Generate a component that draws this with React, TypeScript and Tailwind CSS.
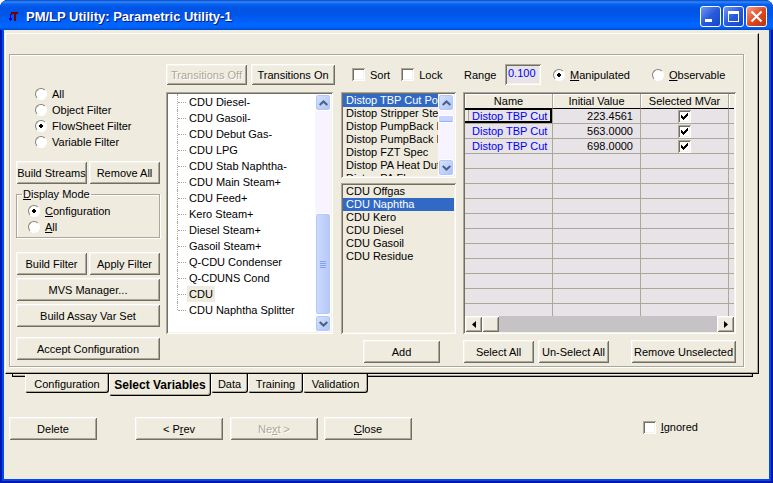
import React, { useState } from "react";

const raised =
  "bg-[#efebde] shadow-[inset_1px_1px_0_#fff,inset_-1px_-1px_0_#716f64,inset_2px_2px_0_#f5f2e9,inset_-2px_-2px_0_#aca899]";
const sunken =
  "shadow-[inset_1px_1px_0_#aca899,inset_-1px_-1px_0_#fff,inset_2px_2px_0_#716f64,inset_-2px_-2px_0_#f5f2e9]";

function Btn({ children, className = "", disabled = false, short = false }: { children: React.ReactNode; className?: string; disabled?: boolean; short?: boolean }) {
  return (
    <button
      type="button"
      disabled={disabled}
      className={`shrink-0 whitespace-nowrap text-center disabled:text-[#aca899] disabled:[text-shadow:1px_1px_0_#fff] ${short ? "h-[21px]" : "h-[23px]"} ${raised} ${className}`}
    >
      {children}
    </button>
  );
}

function Radio({ name, children, checked = false, className = "" }: { name: string; children: React.ReactNode; checked?: boolean; className?: string }) {
  return (
    <label className={`flex h-4 items-center gap-[5px] whitespace-nowrap ${className}`}>
      <input
        type="radio"
        name={name}
        defaultChecked={checked}
        className="size-3 shrink-0 appearance-none rounded-full border border-t-[#848274] border-l-[#848274] border-r-white border-b-white bg-white checked:bg-[radial-gradient(circle,#000_2px,#fff_2px)]"
      />
      <span>{children}</span>
    </label>
  );
}

function Check({ label, children, checked = false }: { label?: string; children?: React.ReactNode; checked?: boolean }) {
  const [on, setOn] = useState(checked);
  return (
    <label className="inline-flex items-center gap-[5px] whitespace-nowrap">
      <span className="relative block size-[13px]">
        <input
          type="checkbox"
          aria-label={label}
          checked={on}
          onChange={() => setOn(!on)}
          className={`block size-[13px] appearance-none bg-white ${sunken}`}
        />
        {on && (
          <svg viewBox="0 0 13 13" className="pointer-events-none absolute inset-0 size-[13px]" shapeRendering="crispEdges">
            <path d="M3 5h1v1h1v1h1v-1h1v-1h1v-1h1v-1h1v3h-1v1h-1v1h-1v1h-1v1h-1v-1h-1v-1h-1z" fill="#000" />
          </svg>
        )}
      </span>
      {children && <span>{children}</span>}
    </label>
  );
}

function Arrow({ up = false }: { up?: boolean }) {
  return (
    <button
      type="button"
      aria-label={up ? "Scroll up" : "Scroll down"}
      className="flex h-[17px] w-full shrink-0 items-center justify-center rounded-[3px] border border-white bg-linear-to-br from-[#d6e3ff] to-[#adc3f7] shadow-[inset_0_0_0_1px_#b5c7f7]"
    >
      <svg viewBox="0 0 9 6" className="h-1.5 w-[9px]" fill="none" stroke="#4a6184" strokeWidth="2">
        <path d={up ? "M0.7 5 4.5 1.4 8.3 5" : "M0.7 1 4.5 4.6 8.3 1"} />
      </svg>
    </button>
  );
}

const tree = [
  "CDU Diesel-", "CDU Gasoil-", "CDU Debut Gas-", "CDU LPG", "CDU Stab Naphtha-", "CDU Main Steam+", "CDU Feed+",
  "Kero Steam+", "Diesel Steam+", "Gasoil Steam+", "Q-CDU Condenser", "Q-CDUNS Cond", "CDU", "CDU Naphtha Splitter",
];
const variables = [
  "Distop TBP Cut Point", "Distop Stripper Steam", "Distop PumpBack Rate", "Distop PumpBack Return", "Distop FZT Spec",
  "Distop PA Heat Duty", "Distop PA Flow",
];
const streams = ["CDU Offgas", "CDU Naphtha", "CDU Kero", "CDU Diesel", "CDU Gasoil", "CDU Residue"];
const rows = [
  ["Distop TBP Cut", "223.4561"],
  ["Distop TBP Cut", "563.0000"],
  ["Distop TBP Cut", "698.0000"],
];
const blanks = Array.from({ length: 11 }, (_, i) => i);
const tabs = [
  { name: "Configuration", size: "w-[84px]" },
  { name: "Select Variables", size: "w-[102px]" },
  { name: "Data", size: "w-[37px]" },
  { name: "Training", size: "w-[55px]" },
  { name: "Validation", size: "w-[65px]" },
];

function TitleBar() {
  const base = "flex size-[21px] items-center justify-center rounded-[3px] border border-white";
  const blue = "bg-linear-to-br from-[#7396ef] via-[#2959de] to-[#1845c6]";
  return (
    <header className="flex h-[30px] items-center bg-[linear-gradient(#0845c6_0px,#3188f7_2px,#0861ef_4px,#0055e7_8px,#0055e7_14px,#0065ff_24px,#0065ff_27px,#0049ce_30px)] pt-[3px] pr-1.5 pl-2">
      <svg viewBox="0 0 11 11" className="size-[11px] shrink-0" shapeRendering="crispEdges">
        <path d="M2 3h1v4h1v2h-1v1h-1v-1h-1v-2h1z" fill="#0000c6" />
        <path d="M3 1h7v2h-2v7h-2v-7h-2v1h-1z" fill="#730000" />
      </svg>
      <h1 className="ml-[7px] flex-1 text-[13px] font-bold whitespace-nowrap text-white [text-shadow:1px_1px_0_#001884]">
        PM/LP Utility: Parametric Utility-1
      </h1>
      <div className="flex gap-0.5">
        <button type="button" aria-label="Minimize" className={`${base} ${blue}`}>
          <svg viewBox="0 0 19 19" className="size-[19px]"><path d="M4 12h7v3h-7z" fill="#fff" /></svg>
        </button>
        <button type="button" aria-label="Maximize" className={`${base} ${blue}`}>
          <svg viewBox="0 0 19 19" className="size-[19px]"><path d="M4 4h11v11h-11zM5 7v7h9v-7z" fill="#fff" fillRule="evenodd" /></svg>
        </button>
        <button type="button" aria-label="Close window" className={`${base} bg-linear-to-br from-[#f79c84] via-[#de4921] to-[#bd3010]`}>
          <svg viewBox="0 0 19 19" className="size-[19px]"><path d="M4.5 4.5 14.5 14.5M14.5 4.5 4.5 14.5" stroke="#fff" strokeWidth="2.2" /></svg>
        </button>
      </div>
    </header>
  );
}

function FilterColumn() {
  return (
    <div className="flex w-36 shrink-0 flex-col pt-[22px]">
      <div className="flex flex-col pl-[19px]">
        <Radio name="filter">All</Radio>
        <Radio name="filter">Object Filter</Radio>
        <Radio name="filter" checked>FlowSheet Filter</Radio>
        <Radio name="filter">Variable Filter</Radio>
      </div>
      <div className="mt-[11px] flex gap-0.5">
        <Btn className="w-[71px]">Build Streams</Btn>
        <Btn className="w-[71px]">Remove All</Btn>
      </div>
      <fieldset className="mt-1 border border-[#aca899] pt-[3px] pb-0.5 pl-[11px] shadow-[1px_1px_0_#fff,inset_1px_1px_0_#fff]">
        <legend className="-ml-1.5 h-3 px-px leading-3"><u>D</u>isplay Mode</legend>
        <Radio name="mode" checked><u>C</u>onfiguration</Radio>
        <Radio name="mode"><u>A</u>ll</Radio>
      </fieldset>
      <div className="mt-3.5 flex gap-0.5">
        <Btn className="w-[71px]">Build Filter</Btn>
        <Btn className="w-[71px]">Apply Filter</Btn>
      </div>
      <Btn className="mt-[3px]">MVS Manager...</Btn>
      <Btn className="mt-[3px]">Build Assay Var Set</Btn>
      <Btn className="mt-2.5">Accept Configuration</Btn>
    </div>
  );
}

function TreeColumn() {
  return (
    <div className="flex w-[169px] shrink-0 flex-col gap-[7px]">
      <div className="flex justify-between">
        <Btn short disabled className="w-[81px]">Transitions Off</Btn>
        <Btn short className="w-[84px]">Transitions On</Btn>
      </div>
      <div className={`flex h-[242px] w-[167px] bg-white p-0.5 ${sunken}`}>
        <ul role="tree" className="flex-1 pl-[9px]">
          {tree.map((t, i) => (
            <li key={t} role="treeitem" className="flex h-4 items-center whitespace-nowrap">
              <span className={`w-px self-start border-l border-dotted border-[#aca899] ${i === tree.length - 1 ? "h-2" : "h-4"}`} />
              <span className="w-2 border-t border-dotted border-[#aca899]" />
              <span className={`ml-px px-0.5 leading-4 ${t === "CDU" ? "bg-[#efebde]" : ""}`}>{t}</span>
            </li>
          ))}
        </ul>
        <div className="flex w-4 flex-col bg-[#f7f3ff]">
          <Arrow up />
          <div className="flex-1" />
          <div className="flex h-[102px] flex-col items-center justify-center gap-px rounded-[3px] border border-white bg-linear-to-r from-[#cedbff] to-[#b5c7f7] shadow-[inset_0_0_0_1px_#b5c7f7]">
            <i className="h-px w-1.5 bg-[#84a2e7]" />
            <i className="h-px w-1.5 bg-[#84a2e7]" />
            <i className="h-px w-1.5 bg-[#84a2e7]" />
            <i className="h-px w-1.5 bg-[#84a2e7]" />
          </div>
          <Arrow />
        </div>
      </div>
    </div>
  );
}

function ListColumn() {
  return (
    <div className="flex w-[116px] shrink-0 flex-col">
      <div className="flex h-[21px] items-center gap-[11px] pl-[11px]">
        <Check>Sort</Check>
        <Check>Lock</Check>
      </div>
      <div className={`mt-[7px] flex h-[86px] w-[115px] p-0.5 ${sunken}`}>
        <ul role="listbox" aria-label="Variables" className="h-full min-w-0 flex-1 overflow-hidden">
          {variables.map((v, i) => (
            <li key={v} role="option" aria-selected={i === 0} className={`h-[13px] overflow-hidden pl-[3px] leading-[13px] whitespace-nowrap ${i === 0 ? "bg-[#316ac5] text-white" : ""}`}>
              {v}
            </li>
          ))}
        </ul>
        <div className="flex w-4 flex-col bg-[#f7f3ff]">
          <Arrow up />
          <div className="mt-1 h-2 rounded-xs border border-white bg-[#c6d3ff] shadow-[inset_0_-1px_0_#94b2ef]" />
          <div className="flex-1" />
          <Arrow />
        </div>
      </div>
      <ul role="listbox" aria-label="Streams" className={`mt-[5px] h-[151px] w-[115px] p-0.5 ${sunken}`}>
        {streams.map((s, i) => (
          <li key={s} role="option" aria-selected={i === 1} className={`h-[13px] pl-[3px] leading-[13px] ${i === 1 ? "bg-[#316ac5] text-white" : ""}`}>
            {s}
          </li>
        ))}
      </ul>
      <Btn className="mt-1.5 ml-[22px] w-[77px]">Add</Btn>
    </div>
  );
}

function GridColumn() {
  const cell = "h-[15px] overflow-hidden border-r border-b border-[#aca899] p-0 leading-[14px] whitespace-nowrap";
  const head = "h-[15px] overflow-hidden border-r border-b border-r-[#aca899] border-b-black p-0 text-center leading-[14px] font-normal whitespace-nowrap shadow-[inset_1px_1px_0_#fff]";
  return (
    <div className="flex min-w-0 flex-1 flex-col">
      <div className="flex h-[21px] items-center">
        <label htmlFor="range" className="w-[42px] pl-px">Range</label>
        <input id="range" defaultValue="0.100" className={`h-[21px] w-9 bg-[#e7e3e7] pb-1 pl-[3px] text-[#0000ff] ${sunken}`} />
        <Radio name="kind" checked className="ml-3 w-[99px]"><u>M</u>anipulated</Radio>
        <Radio name="kind"><u>O</u>bservable</Radio>
      </div>
      <div className={`mt-[7px] flex h-[242px] flex-col p-0.5 ${sunken}`}>
        <div className="min-h-0 flex-1 overflow-hidden bg-[#e7e3e7]">
          <table className="w-full table-fixed border-separate border-spacing-0">
            <colgroup>
              <col className="w-22" />
              <col className="w-22" />
              <col className="w-22" />
              <col />
            </colgroup>
            <thead className="bg-[#efebde]">
              <tr>
                <th className={head}>Name</th>
                <th className={head}>Initial Value</th>
                <th className={head}>Selected MVar</th>
                <td className="h-[15px] border-b border-black p-0 shadow-[inset_1px_1px_0_#fff]" />
              </tr>
            </thead>
            <tbody>
              {rows.map((r, i) => (
                <tr key={i}>
                  <td className={`${cell} pl-[7px] text-[#0000ff] ${i === 0 ? "shadow-[inset_-2px_0_0_#000,inset_0_1px_0_#000,inset_0_-2px_0_#000,inset_3px_0_0_#efebde,inset_4px_0_0_#aca899]" : ""}`}>{r[0]}</td>
                  <td className={`${cell} pr-[7px] text-right`}>{r[1]}</td>
                  <td className={cell}>
                    <div className="flex h-3.5 items-center justify-center"><Check label={`Select variable ${i + 1}`} checked /></div>
                  </td>
                  <td className="h-[15px] border-b border-[#aca899] p-0" />
                </tr>
              ))}
              {blanks.map((b) => (
                <tr key={b}>
                  <td className={cell} />
                  <td className={cell} />
                  <td className={cell} />
                  <td className="h-[15px] border-b border-[#aca899] p-0" />
                </tr>
              ))}
            </tbody>
          </table>
        </div>
        <div className="flex h-4 bg-[#c6c3c6]">
          <button type="button" aria-label="Scroll left" className={`flex w-[17px] items-center justify-center ${raised}`}>
            <svg viewBox="0 0 4 7" className="h-[7px] w-1"><path d="M4 0v7L0 3.5z" /></svg>
          </button>
          <div className={`w-[17px] ${raised}`} />
          <div className="flex-1" />
          <button type="button" aria-label="Scroll right" className={`flex w-[17px] items-center justify-center ${raised}`}>
            <svg viewBox="0 0 4 7" className="h-[7px] w-1"><path d="M0 0v7L4 3.5z" /></svg>
          </button>
        </div>
      </div>
      <div className="mt-1.5 flex gap-1">
        <Btn className="w-[71px]">Select All</Btn>
        <Btn className="w-[71px]">Un-Select All</Btn>
        <Btn className="ml-auto w-[105px]">Remove Unselected</Btn>
      </div>
    </div>
  );
}

export default function App() {
  return (
    <div className="overflow-hidden rounded-t-lg bg-[#0049ef] font-['Liberation_Sans',Arial,sans-serif] text-[11px] leading-4 text-black shadow-[inset_0_0_0_2px_#0018ad]">
      <TitleBar />
      <main className="mx-1 mb-1 bg-[#efebde] pt-[3px] pb-[39px]">
        <section className="mr-2.5 ml-px border-t border-r border-b border-l border-t-white border-r-black border-b-black border-l-white pt-5 pr-3.5 pb-1.5 pl-[3px] shadow-[inset_-1px_-1px_0_#aca899]">
          <div className="border border-[#aca899] shadow-[inset_1px_1px_0_#fff,1px_1px_0_#fff]">
            <div className="flex gap-1.5 pt-[9px] pr-[7px] pb-[3px] pl-1.5">
              <FilterColumn />
              <TreeColumn />
              <ListColumn />
              <GridColumn />
            </div>
          </div>
        </section>
        <nav role="tablist" className="mr-4 ml-2 flex h-[22px] items-start">
          <span className="h-[3px] w-[13px] border-b border-l border-black shadow-[inset_0_-1px_0_#aca899]" />
          {tabs.map((t) => {
            const on = t.name === "Select Variables";
            return (
              <button
                key={t.name}
                type="button"
                role="tab"
                aria-selected={on}
                className={`shrink-0 rounded-b-[3px] border-r border-b border-l border-r-black border-b-black border-l-white text-center whitespace-nowrap shadow-[inset_-1px_-1px_0_#aca899] ${t.size} ${on ? "h-[22px] text-[12px] font-bold" : "h-[19px] pt-0.5"}`}
              >
                {t.name}
              </button>
            );
          })}
          <span className="h-[3px] flex-1 border-r border-b border-black shadow-[inset_-1px_-1px_0_#aca899]" />
        </nav>
        <footer className="mt-[21px] flex items-center pr-[71px] pl-[5px]">
          <Btn className="w-[88px]">Delete</Btn>
          <Btn className="ml-[38px] w-[88px]">&lt; P<u>r</u>ev</Btn>
          <Btn disabled className="ml-[7px] w-[88px]">Ne<u>x</u>t &gt;</Btn>
          <Btn className="ml-1.5 w-[88px]"><u>C</u>lose</Btn>
          <div className="ml-auto">
            <Check><u>I</u>gnored</Check>
          </div>
        </footer>
      </main>
    </div>
  );
}
